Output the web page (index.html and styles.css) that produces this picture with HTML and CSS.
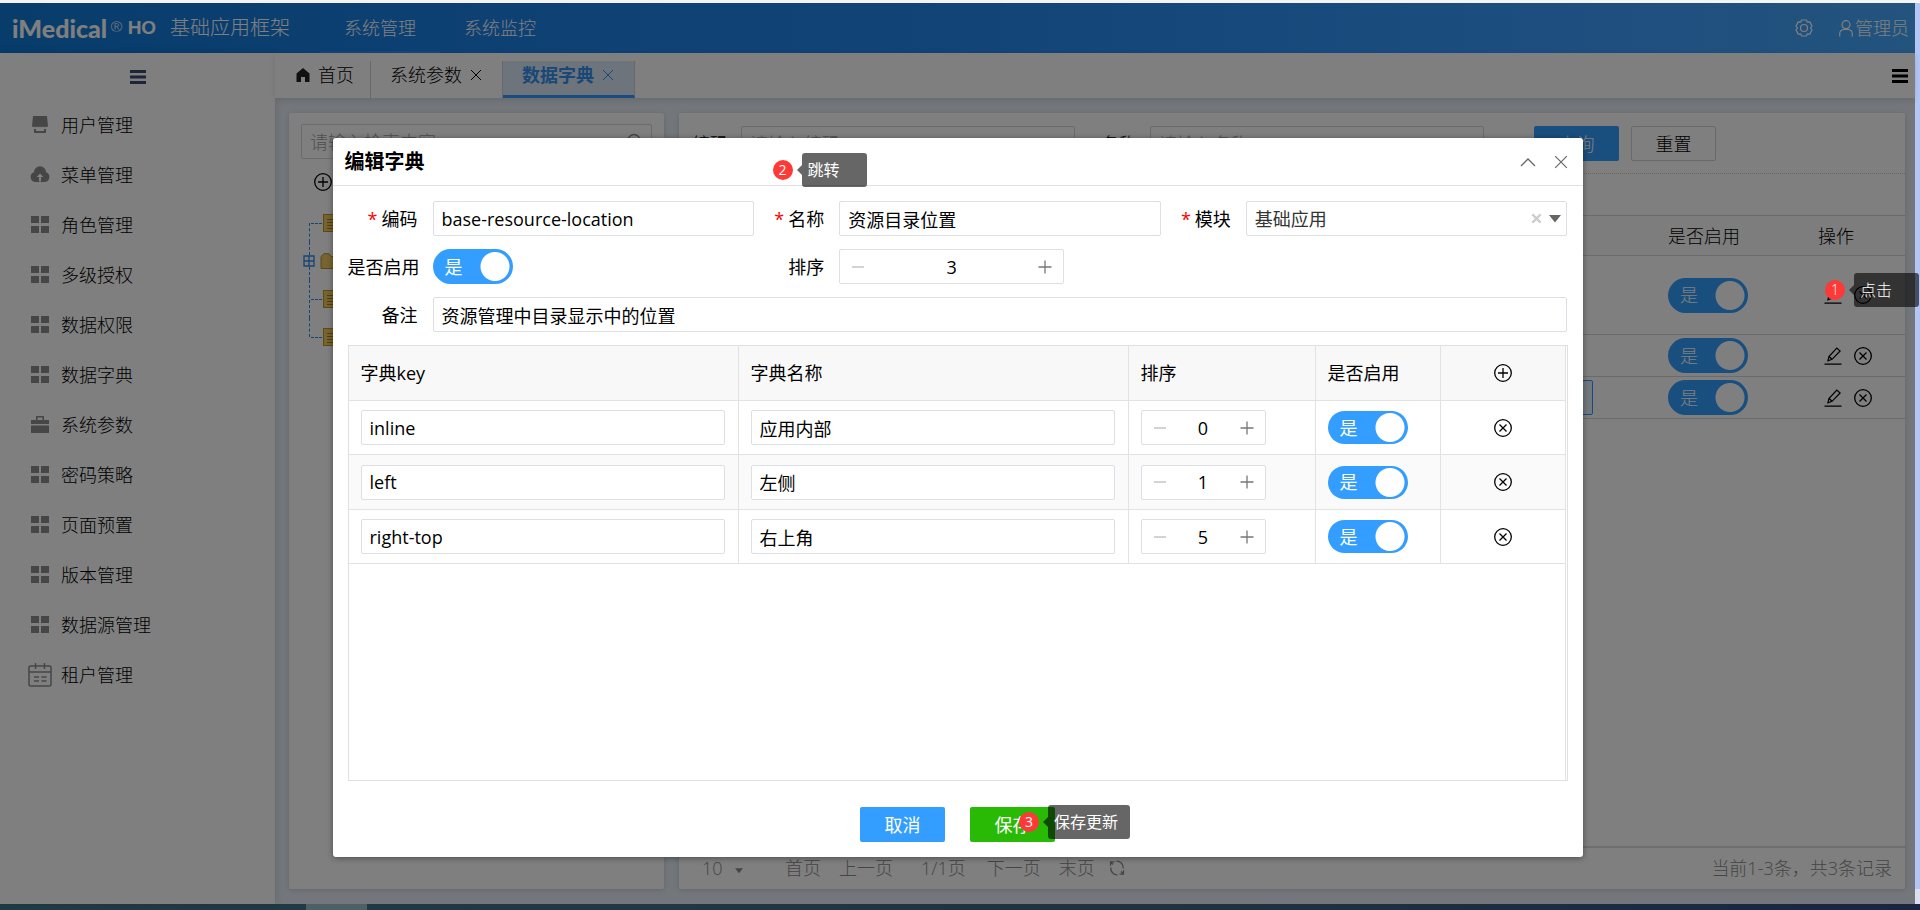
FILE: index.html
```html
<!DOCTYPE html>
<html lang="zh-CN">
<head>
<meta charset="utf-8">
<title>数据字典</title>
<link rel="stylesheet" href="styles.css">
</head>
<body>
<svg class="sprite" aria-hidden="true">
  <symbol id="i-grid" viewBox="0 0 18 18"><path fill="currentColor" d="M0 0h8v7H0zM10 0h8v7h-8zM0 10h8v7H0zM10 10h8v7h-8z"/></symbol>
  <symbol id="i-shop" viewBox="0 0 18 18"><path fill="currentColor" d="M2 0h14l1 10q-1 2-2.500 .5-1.200 1.500-2.700 0-1.300 1.500-2.800 0-1.500 1.500-2.800 0-1.500 1.500-2.700 0Q2 12 1 10zM3 13h2v2h8v-2h2v4H3z"/></symbol>
  <symbol id="i-cloud" viewBox="0 0 20 18"><path fill="currentColor" fill-rule="evenodd" d="M5 16a5 5 0 0 1-1-9.700A6 6 0 0 1 16 6.300 5 5 0 0 1 15 16zM9 15.500h2V11h2.500L10 7.500 6.500 11H9z"/></symbol>
  <symbol id="i-case" viewBox="0 0 18 18"><path fill="currentColor" fill-rule="evenodd" d="M5 4V0h8v4h5v4H0V4zm1.500 0h5V1.500h-5zM0 9.500h18V17H0z"/></symbol>
  <symbol id="i-calendar" viewBox="0 0 24 24"><g fill="none" stroke="currentColor" stroke-width="1.500"><rect x="1" y="3" width="22" height="20" rx="1.500"/><path d="M1 9h22M7.500 0v6M16.500 0v6M6 14h5M13.500 14h5M6 18h5M13.500 18h5"/></g></symbol>
  <symbol id="i-bars" viewBox="0 0 18 18"><path fill="currentColor" d="M1 2h16v3H1zM1 7.500h16v3H1zM1 13h16v3H1z"/></symbol>
  <symbol id="i-home" viewBox="0 0 14 14"><path fill="currentColor" d="M7 0l6.500 5.500V14H9V9H5v5H.5V5.500z"/></symbol>
  <symbol id="i-x" viewBox="0 0 12 12"><path fill="none" stroke="currentColor" d="M1 1l10 10M11 1L1 11"/></symbol>
  <symbol id="i-up" viewBox="0 0 16 12"><path fill="none" stroke="currentColor" stroke-width="1.300" d="M1 10l7-7 7 7"/></symbol>
  <symbol id="i-down" viewBox="0 0 12 8"><path fill="currentColor" d="M0 0h12L6 7.500z"/></symbol>
  <symbol id="i-add" viewBox="0 0 18 18"><g fill="none" stroke="currentColor" stroke-width="1.300"><circle cx="9" cy="9" r="8.300"/><path d="M9 4v10M4 9h10"/></g></symbol>
  <symbol id="i-remove" viewBox="0 0 18 18"><g fill="none" stroke="currentColor" stroke-width="1.300"><circle cx="9" cy="9" r="8.300"/><path d="M5.500 5.500l7 7M12.500 5.500l-7 7"/></g></symbol>
  <symbol id="i-edit" viewBox="0 0 18 19"><g fill="none" stroke="currentColor" stroke-width="1.300"><path d="M0 18h18M3.700 14.500l1-4.500L13 1.200l3.500 3L8 13zM4.800 10L8 13"/></g></symbol>
  <symbol id="i-gear" viewBox="0 0 18 18"><g fill="none" stroke="currentColor" stroke-width="1.200"><path d="M6.500 1h5l.8 2.200 2.500-.2L17 7l-1.400 2L17 11l-2.200 4-2.500-.2-.8 2.200h-5l-.8-2.200-2.500.2L1 11l1.400-2L1 7l2.200-4 2.500.2z"/><circle cx="9" cy="9" r="3.500"/></g></symbol>
  <symbol id="i-user" viewBox="0 0 14 17"><g fill="none" stroke="currentColor" stroke-width="1.200"><circle cx="7" cy="4.700" r="4"/><path d="M.7 16.500V14q0-4 4-4.500h4.600q4 .5 4 4.500v2.500"/></g></symbol>
  <symbol id="i-search" viewBox="0 0 18 18"><g fill="none" stroke="currentColor" stroke-width="1.300"><circle cx="8" cy="7.500" r="6"/><path d="M12.500 12l4 4"/></g></symbol>
  <symbol id="i-minus" viewBox="0 0 14 14"><path stroke="currentColor" stroke-width="1.300" d="M1 7h12"/></symbol>
  <symbol id="i-plus" viewBox="0 0 14 14"><path stroke="currentColor" stroke-width="1.300" d="M.5 7h13M7 .5v13"/></symbol>
  <symbol id="i-clear" viewBox="0 0 12 12"><path stroke="currentColor" stroke-width="2.400" d="M1.500 1.500l9 9M10.500 1.500l-9 9"/></symbol>
  <symbol id="i-refresh" viewBox="0 0 16 16"><g fill="none" stroke="currentColor" stroke-width="1.300"><path d="M5.500 1.800H1.500v4M10.500 14.200h4v-4M7.500 1.200A6.500 6.500 0 0 1 14.200 8.500M8.500 14.800A6.500 6.500 0 0 1 1.800 7.500M1.500 1.800L4 4.500M14.500 14.200L12 11.500"/></g></symbol>
  <symbol id="i-doc" viewBox="0 0 18 18"><rect x=".5" y=".5" width="17" height="17" fill="#eccb60" stroke="#c49322"/><path stroke="#a87c1c" d="M4 5.500h10M4 8.500h10M4 11.500h10M4 14.500h6"/></symbol>
  <symbol id="i-folder" viewBox="0 0 20 16"><path d="M1 3.500L4 .7h5l2 2.800h8v12H1z" fill="#eccb60" stroke="#b88f3c"/></symbol>
  <symbol id="i-expand" viewBox="0 0 12 12"><path d="M1 1h10v10H1zM6 1v10M1 6h10" fill="none" stroke="#2f8be6" stroke-width="1.300"/></symbol>
</svg>

<div class="frame">
  <div class="app">
    <header class="topbar">
      <div class="logo"><span class="logo-name">iMedical</span><span class="logo-reg">®</span><span class="logo-ho">HO</span></div>
      <h1 class="product">基础应用框架</h1>
      <nav class="topnav"><a class="topnav-link is-active" href="#">系统管理</a><a class="topnav-link" href="#">系统监控</a></nav>
      <div class="account">
        <button class="icon-btn" aria-label="设置"><svg class="ic18"><use href="#i-gear"/></svg></button>
        <button class="user"><svg class="ic-user"><use href="#i-user"/></svg>管理员</button>
      </div>
    </header>
    <div class="main">
      <aside class="sidebar">
        <button class="collapse" aria-label="收起菜单"><svg class="ic18"><use href="#i-bars"/></svg></button>
        <nav class="menu">
          <a href="#"><span class="menu-icon"><svg class="ic18"><use href="#i-shop"/></svg></span>用户管理</a>
          <a href="#"><span class="menu-icon"><svg class="ic20"><use href="#i-cloud"/></svg></span>菜单管理</a>
          <a href="#"><span class="menu-icon"><svg class="ic18"><use href="#i-grid"/></svg></span>角色管理</a>
          <a href="#"><span class="menu-icon"><svg class="ic18"><use href="#i-grid"/></svg></span>多级授权</a>
          <a href="#"><span class="menu-icon"><svg class="ic18"><use href="#i-grid"/></svg></span>数据权限</a>
          <a href="#"><span class="menu-icon"><svg class="ic18"><use href="#i-grid"/></svg></span>数据字典</a>
          <a href="#"><span class="menu-icon"><svg class="ic18"><use href="#i-case"/></svg></span>系统参数</a>
          <a href="#"><span class="menu-icon"><svg class="ic18"><use href="#i-grid"/></svg></span>密码策略</a>
          <a href="#"><span class="menu-icon"><svg class="ic18"><use href="#i-grid"/></svg></span>页面预置</a>
          <a href="#"><span class="menu-icon"><svg class="ic18"><use href="#i-grid"/></svg></span>版本管理</a>
          <a href="#"><span class="menu-icon"><svg class="ic18"><use href="#i-grid"/></svg></span>数据源管理</a>
          <a href="#"><span class="menu-icon"><svg class="ic24"><use href="#i-calendar"/></svg></span>租户管理</a>
        </nav>
      </aside>
      <div class="workspace">
        <div class="tabs">
          <a class="tab tab-home" href="#"><svg class="ic14"><use href="#i-home"/></svg>首页</a>
          <a class="tab" href="#">系统参数<svg class="ic12"><use href="#i-x"/></svg></a>
          <a class="tab is-active" href="#">数据字典<svg class="ic12"><use href="#i-x"/></svg></a>
          <button class="tab-menu" aria-label="标签菜单"><svg class="ic18"><use href="#i-bars"/></svg></button>
        </div>
        <div class="panels">
          <section class="panel tree-panel">
            <div class="search"><input class="field" type="text" placeholder="请输入检索内容" aria-label="检索"><svg class="ic18"><use href="#i-search"/></svg></div>
            <button class="icon-btn tree-add" aria-label="新增"><svg class="ic18"><use href="#i-add"/></svg></button>
            <ul class="tree">
              <li><svg class="ic18"><use href="#i-doc"/></svg></li>
              <li class="has-children"><svg class="ic12"><use href="#i-expand"/></svg><svg class="ic20"><use href="#i-folder"/></svg></li>
              <li><svg class="ic18"><use href="#i-doc"/></svg></li>
              <li><svg class="ic18"><use href="#i-doc"/></svg></li>
            </ul>
          </section>
          <section class="panel list-panel">
            <form class="query">
              <label for="q-code">编码</label><input class="field" id="q-code" type="text" placeholder="请输入编码">
              <label for="q-name">名称</label><input class="field" id="q-name" type="text" placeholder="请输入名称">
              <div class="query-actions"><button class="btn btn-blue" type="button">查询</button><button class="btn btn-plain" type="button">重置</button></div>
            </form>
            <table class="list">
              <colgroup><col><col class="c-enabled"><col class="c-ops"></colgroup>
              <thead><tr><th></th><th>是否启用</th><th>操作</th></tr></thead>
              <tbody>
                <tr class="tall"><td></td><td><label class="switch"><input type="checkbox" aria-label="是否启用" checked><span>是</span></label></td><td><span class="ops"><button class="icon-btn" aria-label="编辑"><svg class="ic18"><use href="#i-edit"/></svg></button><button class="icon-btn" aria-label="删除"><svg class="ic18"><use href="#i-remove"/></svg></button></span></td></tr>
                <tr><td></td><td><label class="switch"><input type="checkbox" aria-label="是否启用" checked><span>是</span></label></td><td><span class="ops"><button class="icon-btn" aria-label="编辑"><svg class="ic18"><use href="#i-edit"/></svg></button><button class="icon-btn" aria-label="删除"><svg class="ic18"><use href="#i-remove"/></svg></button></span></td></tr>
                <tr><td class="cell-edit"><input class="field is-selected" type="text" aria-label="备注"></td><td><label class="switch"><input type="checkbox" aria-label="是否启用" checked><span>是</span></label></td><td><span class="ops"><button class="icon-btn" aria-label="编辑"><svg class="ic18"><use href="#i-edit"/></svg></button><button class="icon-btn" aria-label="删除"><svg class="ic18"><use href="#i-remove"/></svg></button></span></td></tr>
              </tbody>
            </table>
            <footer class="pager">
              <span class="page-size"><select aria-label="每页条数"><option>10</option></select><svg class="caret"><use href="#i-down"/></svg></span>
              <button>首页</button><button>上一页</button><span class="page-no">1/1页</span><button>下一页</button><button>末页</button>
              <button class="reload" aria-label="刷新"><svg class="ic16"><use href="#i-refresh"/></svg></button>
              <span class="summary">当前1-3条，共3条记录</span>
            </footer>
          </section>
        </div>
      </div>
    </div>

    <div class="overlay">
      <section class="modal" role="dialog" aria-labelledby="modal-title">
        <header class="modal-head">
          <h2 id="modal-title">编辑字典</h2>
          <button class="icon-btn" aria-label="收起"><svg class="ic16"><use href="#i-up"/></svg></button>
          <button class="icon-btn" aria-label="关闭"><svg class="ic14"><use href="#i-x"/></svg></button>
          <div class="mark mark-jump"><span class="mark-no">2</span><span class="mark-tip">跳转</span></div>
        </header>
        <div class="modal-body">
          <form class="form">
            <div class="item"><label for="f-code"><i>*</i>编码</label><input class="field" id="f-code" type="text" value="base-resource-location"></div>
            <div class="item"><label for="f-name"><i>*</i>名称</label><input class="field" id="f-name" type="text" value="资源目录位置"></div>
            <div class="item"><label for="f-module"><i>*</i>模块</label><div class="select"><select class="field" id="f-module"><option>基础应用</option></select><span class="select-icons"><svg class="clear"><use href="#i-clear"/></svg><svg class="arrow"><use href="#i-down"/></svg></span></div></div>
            <div class="item"><label for="f-on">是否启用</label><span class="switch"><input type="checkbox" id="f-on" checked><span>是</span></span></div>
            <div class="item"><label for="f-sort">排序</label><div class="stepper stepper-wide"><button type="button" class="minus" aria-label="减少"><svg class="ic14"><use href="#i-minus"/></svg></button><input id="f-sort" type="number" value="3"><button type="button" aria-label="增加"><svg class="ic14"><use href="#i-plus"/></svg></button></div></div>
            <div class="item item-full"><label for="f-note">备注</label><input class="field" id="f-note" type="text" value="资源管理中目录显示中的位置"></div>
          </form>
          <div class="dict-box">
            <table class="dict">
              <colgroup><col class="d-text"><col class="d-text"><col class="d-sort"><col class="d-on"><col class="d-op"></colgroup>
              <thead><tr><th>字典key</th><th>字典名称</th><th>排序</th><th>是否启用</th><th class="center"><button class="icon-btn" aria-label="新增"><svg class="ic18"><use href="#i-add"/></svg></button></th></tr></thead>
              <tbody>
                <tr><td><input class="field" type="text" aria-label="字典key" value="inline"></td><td><input class="field" type="text" aria-label="字典名称" value="应用内部"></td><td><div class="stepper"><button class="minus" aria-label="减少"><svg class="ic14"><use href="#i-minus"/></svg></button><input type="number" aria-label="排序" value="0"><button aria-label="增加"><svg class="ic14"><use href="#i-plus"/></svg></button></div></td><td><label class="switch switch-low"><input type="checkbox" aria-label="是否启用" checked><span>是</span></label></td><td class="center"><button class="icon-btn" aria-label="删除"><svg class="ic18"><use href="#i-remove"/></svg></button></td></tr>
                <tr><td><input class="field" type="text" aria-label="字典key" value="left"></td><td><input class="field" type="text" aria-label="字典名称" value="左侧"></td><td><div class="stepper"><button class="minus" aria-label="减少"><svg class="ic14"><use href="#i-minus"/></svg></button><input type="number" aria-label="排序" value="1"><button aria-label="增加"><svg class="ic14"><use href="#i-plus"/></svg></button></div></td><td><label class="switch switch-low"><input type="checkbox" aria-label="是否启用" checked><span>是</span></label></td><td class="center"><button class="icon-btn" aria-label="删除"><svg class="ic18"><use href="#i-remove"/></svg></button></td></tr>
                <tr><td><input class="field" type="text" aria-label="字典key" value="right-top"></td><td><input class="field" type="text" aria-label="字典名称" value="右上角"></td><td><div class="stepper"><button class="minus" aria-label="减少"><svg class="ic14"><use href="#i-minus"/></svg></button><input type="number" aria-label="排序" value="5"><button aria-label="增加"><svg class="ic14"><use href="#i-plus"/></svg></button></div></td><td><label class="switch switch-low"><input type="checkbox" aria-label="是否启用" checked><span>是</span></label></td><td class="center"><button class="icon-btn" aria-label="删除"><svg class="ic18"><use href="#i-remove"/></svg></button></td></tr>
              </tbody>
            </table>
          </div>
        </div>
        <footer class="modal-foot">
          <button class="btn btn-blue">取消</button>
          <div class="save"><button class="btn btn-green">保存</button><div class="mark mark-save"><span class="mark-no">3</span><span class="mark-tip">保存更新</span></div></div>
        </footer>
      </section>
    </div>
    <div class="mark mark-click"><span class="mark-no">1</span><span class="mark-tip">点击</span></div>
  </div>
  <div class="edge"></div>
</div>
<div class="taskbar"><span class="task"></span></div>
</body>
</html>
```
FILE: styles.css
```css
* { box-sizing: border-box; }
body {
  margin: 0;
  height: 100vh;
  display: flex;
  flex-direction: column;
  overflow: hidden;
  background: #fff;
  color: #000;
  font: 300 18px/24px "Open Sans", "Noto Sans CJK SC", sans-serif;
}
button, input, select { font: inherit; color: inherit; margin: 0; }
button { border: 0; padding: 0; background: none; white-space: nowrap; }
a { color: inherit; text-decoration: none; }
h1, h2, ul { margin: 0; padding: 0; font-weight: inherit; }
svg { flex: none; display: block; }
.sprite { position: absolute; width: 0; height: 0; }
.ic12 { width: 12px; height: 12px; }
.ic14 { width: 14px; height: 14px; }
.ic16 { width: 16px; height: 16px; }
.ic18 { width: 18px; height: 18px; }
.ic20 { width: 20px; height: 18px; }
.ic24 { width: 24px; height: 24px; }

.frame { flex: 1; display: flex; min-height: 0; border-top: 3px solid #f4f4f4; }
.app { flex: 1; min-width: 0; position: relative; display: flex; flex-direction: column; }
.edge { width: 5px; background: linear-gradient(#b3c6f6 0 886px, #dcdff0 886px); }
.taskbar { height: 6px; display: flex; background: linear-gradient(90deg, #223c44, #20333f 60%, #1a2542); }
.task { width: 61px; margin-left: 306px; background: #4d6068; }

.topbar {
  height: 50px;
  display: flex;
  align-items: center;
  padding: 0 6px 0 12px;
  background: linear-gradient(90deg, #0f79d6, #1a80e4 20%, #2688f0 50%, #3a9cff 80%, #46a8fc);
  color: #fff;
}
.logo { display: flex; align-items: center; width: 158px; }
.logo-name { font: 900 25px/26px Lato, sans-serif; }
.logo-reg { font-size: 15px; line-height: 20px; margin: 0 5px 4px 3px; }
.logo-ho { font: 700 19px/26px "Liberation Sans", sans-serif; }
.product { font-size: 20px; }
.topnav { display: flex; margin-left: 30px; align-self: stretch; }
.topnav-link { width: 120px; text-align: center; line-height: 50px; border-bottom: 2px solid transparent; height: 50px; }
.topnav-link.is-active { border-color: #2e8cf0; }
.account { margin-left: auto; display: flex; align-items: center; gap: 26px; }
.user { display: flex; align-items: center; gap: 2px; }
.ic-user { width: 14px; height: 17px; }
.icon-btn { display: inline-flex; align-items: center; justify-content: center; }

.main { flex: 1; display: flex; min-height: 0; background: #e6edf4; }
.sidebar { width: 275px; background: #fff; box-shadow: 0 0 8px rgba(0, 0, 40, .15); }
.collapse { display: flex; width: 100%; height: 47px; align-items: center; justify-content: center; color: #3c4a6c; }
.menu a { display: flex; align-items: center; height: 50px; gap: 9px; padding-left: 28px; }
.menu-icon { width: 24px; display: flex; justify-content: center; color: #8c8c8c; }

.workspace { flex: 1; min-width: 0; display: flex; flex-direction: column; }
.tabs { height: 45px; display: flex; background: #fff; box-shadow: 0 2px 6px rgba(0, 0, 40, .12); }
.tab { display: flex; align-items: center; gap: 8px; margin: 8px 0 0; padding: 0 20px 10px 19px; border-right: 1px solid #d0d0d0; }
.tab-home { padding: 0 16px 10px 21px; }
.tab-home svg { color: #222; }
.tab.is-active { color: #338fee; font-weight: 700; background: #dbe9f6; border-bottom: 3px solid #3399ff; padding-bottom: 7px; }
.tab-menu { margin: 0 6px 0 auto; }
.panels { flex: 1; min-height: 0; display: flex; gap: 15px; padding: 15px 10px 15px 14px; }
.panel { background: #fff; border-radius: 2px; box-shadow: 0 1px 5px rgba(0, 0, 40, .15); display: flex; flex-direction: column; }
.tree-panel { width: 375px; padding: 11px 12px; }
.list-panel { flex: 1; min-width: 0; }

.field {
  width: 100%;
  height: 35px;
  padding: 0 8px;
  border: 1px solid #dcdfe6;
  border-radius: 2px;
  background: #fff;
  outline: 0;
}
.field::placeholder { color: #a0a0a0; opacity: 1; }
.panel .field { border-color: #d4d6da; }
.search { display: flex; align-items: center; }
.search svg { margin-left: -26px; color: #888; }
.tree-add { align-self: flex-start; margin: 14px 13px 13px; }
.tree { list-style: none; margin-left: 8px; }
.tree li { display: flex; align-items: center; height: 38px; padding-left: 14px; position: relative; }
.tree li::before { content: ""; position: absolute; left: 0; top: 0; height: 38px; border-left: 1px dashed #2f8be6; }
.tree li::after { content: ""; position: absolute; left: 2px; top: 19px; width: 11px; border-top: 1px dashed #2f8be6; }
.tree li:first-child::before { top: 19px; height: 19px; }
.tree li:last-child::before { height: 19px; }
.tree .has-children { padding-left: 0; margin-left: -6px; gap: 5px; }
.tree .has-children::before { left: 6px; }
.tree .has-children::after { display: none; }
.tree .has-children .ic12 { position: relative; background: #fff; }

.query { display: flex; align-items: center; padding: 13px 0 12px 13px; border-bottom: 1px dotted #ccc; }
.query label { margin-right: 13px; }
.query .field { width: 334px; margin-right: 26px; }
.query-actions { display: flex; gap: 12px; margin-left: 24px; }
.btn { width: 85px; height: 35px; border-radius: 2px; }
.btn-blue { background: #339eff; color: #fff; }
.btn-green { background: #28ba05; color: #fff; }
.btn-plain { border: 1px solid #d0d2d8; background: #fff; }

.list { width: 100%; margin-top: 41px; table-layout: fixed; border-spacing: 0; border-top: 1px solid #d6d6d6; }
.list th { height: 40px; background: #fafafa; }
.list th, .list td { padding: 0 13px; font-weight: inherit; text-align: left; border-bottom: 1px solid #d6d6d6; }
.list td { height: 42px; }
.list .tall td { height: 79px; }
.c-enabled { width: 150px; }
.c-ops { width: 100px; }
.list .cell-edit { padding-right: 62px; }
.list .is-selected { display: block; border-color: #3399ff; background: #e3f0fc; }
.ops { display: flex; gap: 12px; margin-left: 6px; }

.pager { margin-top: auto; height: 43px; display: flex; align-items: center; border-top: 2px solid #dcdcdc; padding: 0 13px 2px 23px; color: #8c8c8c; gap: 18px; }
.page-size { display: flex; align-items: center; gap: 12px; margin-right: 24px; }
.page-size select { appearance: none; border: 0; background: none; padding: 0; width: 21px; }
.caret { width: 8px; height: 6px; margin-top: 6px; }
.page-no { margin: 0 3px 0 10px; }
.reload { margin-left: -4px; }
.summary { margin-left: auto; }

.switch { display: flex; position: relative; width: 80px; height: 35px; }
.switch input { appearance: none; width: 80px; height: 100%; border-radius: 18px; background: radial-gradient(circle at 62px 50%, #fff 14px, #339eff 15px); }
.switch span { position: absolute; left: 12px; top: 0; bottom: 0; display: flex; align-items: center; color: #fff; }
.switch-low { height: 33px; }

.overlay { position: absolute; inset: 0; padding: 135px 20px 47px; background: rgba(0, 0, 0, .5); display: flex; justify-content: center; }
.modal { width: 1250px; display: flex; flex-direction: column; background: #fff; border-radius: 3px; box-shadow: 0 1px 6px rgba(0, 0, 0, .4); font-weight: 400; }
.modal-head { position: relative; height: 48px; display: flex; align-items: center; gap: 18px; padding: 0 15px 0 12px; border-bottom: 1px solid #e2e2e2; color: #666; }
.modal-head h2 { margin-right: auto; font-size: 20px; font-weight: 700; color: #000; }
.modal-body { flex: 1; display: flex; flex-direction: column; padding: 15px 15px 0; gap: 13px; }
.form { display: grid; grid-template-columns: repeat(3, 1fr); gap: 13px 0; }
.item { display: flex; align-items: center; }
.item > label { flex: none; width: 85px; padding-right: 15px; text-align: right; white-space: nowrap; }
.item i { font-style: normal; color: #f00; margin-right: 4px; }
.item-full { grid-column: 1 / -1; }
.select { flex: 1; display: flex; align-items: center; }
.select select { appearance: none; color: #333; }
.select-icons { display: flex; align-items: center; gap: 7px; margin-left: -36px; pointer-events: none; }
.clear { width: 11px; height: 11px; color: #ccc; }
.arrow { width: 12px; height: 8px; color: #666; }
.stepper { display: flex; align-items: center; width: 125px; height: 35px; padding: 0 11px; border: 1px solid #dcdfe6; border-radius: 2px; background: #fff; color: #777; }
.stepper-wide { width: 225px; }
.stepper .minus { color: #bbb; }
.stepper input { flex: 1; min-width: 0; border: 0; padding: 0; text-align: center; color: #000; background: none; appearance: textfield; outline: 0; }
.stepper input::-webkit-inner-spin-button { appearance: none; margin: 0; }

.dict-box { flex: 1; border: 1px solid #dfe0e2; padding-right: 1px; background: linear-gradient(#e2e2e2, #e2e2e2) right 1px top / 1px 100% no-repeat; }
.dict { width: 100%; table-layout: fixed; border-spacing: 0; }
.dict th, .dict td { height: 54px; padding: 0 13px 0 12px; font-weight: inherit; text-align: left; border: 0 solid #e2e2e2; border-width: 0 1px 1px 0; }
.dict th { height: 55px; background: #f8f8f8; }
.dict tbody tr:nth-child(even) td { height: 55px; background: #fafafa; }
.dict .center { padding: 0; }
.dict .icon-btn { display: flex; margin: 0 auto; }
.dict .field { display: block; }
.d-sort { width: 187px; }
.d-on, .d-op { width: 125px; }

.modal-foot { display: flex; justify-content: center; gap: 25px; padding: 26px 0 15px; }
.save { position: relative; }

/* Numbered step marks float above the controls they describe */
.mark { position: absolute; display: flex; align-items: center; gap: 9px; height: 34px; white-space: nowrap; color: #fff; }
.mark-no { width: 20px; height: 20px; border-radius: 50%; background: #ff3838; font-size: 14px; line-height: 20px; text-align: center; }
.mark-tip { position: relative; min-width: 65px; height: 34px; padding: 0 12px 0 6px; border-radius: 3px; background: rgba(0, 0, 0, .6); font-size: 16px; line-height: 34px; }
.mark-tip::before { content: ""; position: absolute; right: 100%; top: 12px; border: 5px solid transparent; border-left-width: 0; border-right-color: rgba(0, 0, 0, .6); }
.mark-jump { left: 440px; top: 15px; }
.mark-save { left: 49px; top: -2px; }
.mark-click { right: -4px; top: 270px; z-index: 1; }
```
